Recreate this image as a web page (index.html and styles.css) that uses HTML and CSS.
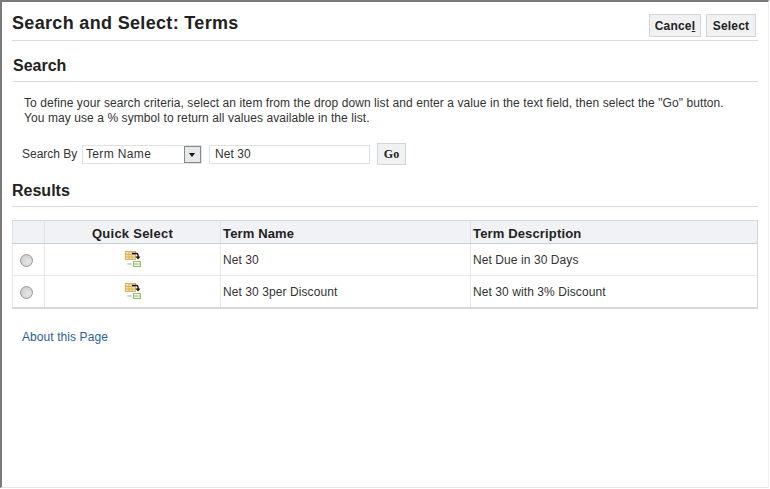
FILE: index.html
```html
<!DOCTYPE html>
<html lang="en">
<head>
    <meta charset="UTF-8">
    <title>Search and Select: Terms</title>
    <link rel="stylesheet" href="styles.css">
</head>
<body>
<div class="window">
    <div class="title-bar">
        <h1 class="title">Search and Select: Terms</h1>
        <div class="actions">
            <button class="btn btn-cancel" type="button">Cance<u>l</u></button>
            <button class="btn btn-select" type="button">Select</button>
        </div>
    </div>

    <h2 class="section section-search">Search</h2>
    <p class="hint">To define your search criteria, select an item from the drop down list and enter a value in the text field, then select the "Go" button.<br>You may use a % symbol to return all values available in the list.</p>
    <div class="search-row">
        <span class="search-label">Search By</span>
        <div class="select">
            <span class="select-value">Term Name</span>
            <span class="select-arrow"></span>
        </div>
        <div class="text-field">Net 30</div>
        <button class="btn btn-go" type="button">Go</button>
    </div>

    <h2 class="section section-results">Results</h2>
    <table class="results">
        <thead>
            <tr>
                <th class="col-radio"></th>
                <th class="col-quick">Quick Select</th>
                <th class="col-name">Term Name</th>
                <th>Term Description</th>
            </tr>
        </thead>
        <tbody>
            <tr>
                <td class="cell-radio"><span class="radio"></span></td>
                <td class="cell-icon">
                    <svg class="quick-icon" width="18" height="18" viewBox="0 0 18 18">
                        <rect x="1.5" y="1.5" width="10" height="8" fill="#f8e2a8" stroke="#d9b365"/>
                        <path d="M2 4.5h9M2 7h9M5 2v7M8 2v7" stroke="#d9b365" fill="none"/>
                        <rect x="9.5" y="11.5" width="7" height="5" fill="#f2f9ea" stroke="#8fbf6c"/>
                        <path d="M10 14h6M3.5 14h4" stroke="#8fbf6c" fill="none"/>
                        <path d="M8 3.5h4.5q1.5 0 1.5 1.5v2" stroke="#111" stroke-width="1.3" fill="none"/>
                        <path d="M11.5 6.5h5l-2.5 3z" fill="#111"/>
                    </svg>
                </td>
                <td class="cell-text">Net 30</td>
                <td class="cell-text">Net Due in 30 Days</td>
            </tr>
            <tr>
                <td class="cell-radio"><span class="radio"></span></td>
                <td class="cell-icon">
                    <svg class="quick-icon" width="18" height="18" viewBox="0 0 18 18">
                        <rect x="1.5" y="1.5" width="10" height="8" fill="#f8e2a8" stroke="#d9b365"/>
                        <path d="M2 4.5h9M2 7h9M5 2v7M8 2v7" stroke="#d9b365" fill="none"/>
                        <rect x="9.5" y="11.5" width="7" height="5" fill="#f2f9ea" stroke="#8fbf6c"/>
                        <path d="M10 14h6M3.5 14h4" stroke="#8fbf6c" fill="none"/>
                        <path d="M8 3.5h4.5q1.5 0 1.5 1.5v2" stroke="#111" stroke-width="1.3" fill="none"/>
                        <path d="M11.5 6.5h5l-2.5 3z" fill="#111"/>
                    </svg>
                </td>
                <td class="cell-text">Net 30 3per Discount</td>
                <td class="cell-text">Net 30 with 3% Discount</td>
            </tr>
        </tbody>
    </table>

    <a class="about" href="#">About this Page</a>
</div>
</body>
</html>
```

FILE: styles.css
```css
* {
    margin: 0;
    padding: 0;
    box-sizing: border-box;
}
html, body {
    height: 100%;
    background: #fff;
    overflow: hidden;
}
body {
    font-family: "Liberation Sans", Arial, sans-serif;
    font-size: 12px;
    letter-spacing: 0.08px;
    color: #333;
}
.window {
    width: 769px;
    height: 488px;
    padding: 0 10px 0 10px;
    border-top: 2px solid #7b7b7b;
    border-left: 2px solid #7b7b7b;
    border-right: 1px solid #f0f0f0;
    border-bottom: 1px solid #e6e6e6;
}
.title-bar {
    display: flex;
    justify-content: space-between;
    height: 39px;
    border-bottom: 1px solid #d9dcdc;
}
.title {
    font-size: 18px;
    line-height: 20px;
    margin-top: 11px;
    color: #222;
    letter-spacing: 0.33px;
}
.actions {
    display: flex;
    gap: 5px;
    margin: 12px 2px 0 0;
}
.btn {
    height: 23px;
    border: 1px solid #d3d6d9;
    background: #eff1f3;
    font-family: "Liberation Sans", Arial, sans-serif;
    font-size: 12px;
    font-weight: bold;
    letter-spacing: 0.2px;
    color: #222;
}
.btn-cancel {
    width: 52px;
}
.btn-select {
    width: 50px;
}
.btn-go {
    width: 29px;
    height: 22px;
    margin-left: 7px;
    font-family: "Liberation Serif", serif;
}
.section {
    font-size: 16px;
    line-height: 18px;
    letter-spacing: 0;
    color: #222;
    border-bottom: 1px solid #d9dcdc;
}
.section-search {
    margin: 16px 0 0 1px;
    padding-bottom: 6px;
}
.section-results {
    margin-top: 17px;
    padding-bottom: 6px;
}
.hint {
    margin: 14px 0 0 12px;
    line-height: 15px;
    color: #333;
}
.search-row {
    display: flex;
    align-items: center;
    margin: 17px 0 0 10px;
    height: 22px;
}
.search-label {
    width: 60px;
    letter-spacing: 0;
}
.select {
    display: flex;
    justify-content: space-between;
    align-items: center;
    width: 120px;
    height: 19px;
    padding: 0 0 0 3px;
    border: 1px solid #dfe2e4;
}
.select-value {
    letter-spacing: 0.35px;
}
.select-arrow {
    position: relative;
    width: 17px;
    height: 17px;
    border: 1px solid #8a8a8a;
    background: #e6e8ea;
}
.select-arrow::after {
    content: "";
    position: absolute;
    left: 4px;
    top: 6px;
    border-left: 3px solid transparent;
    border-right: 3px solid transparent;
    border-top: 4px solid #111;
}
.text-field {
    width: 161px;
    height: 19px;
    margin-left: 7px;
    padding-left: 5px;
    line-height: 17px;
    border: 1px solid #dfe2e4;
}
.results {
    width: 746px;
    margin-top: 13px;
    border-collapse: collapse;
    table-layout: fixed;
    border: 1px solid #d5d8da;
    border-bottom-width: 2px;
}
.results th {
    height: 23px;
    padding: 2px 0 0 2px;
    background: #f0f2f5;
    font-size: 13px;
    letter-spacing: 0.15px;
    text-align: left;
    color: #222;
    border-left: 1px solid #dfe2e5;
    border-bottom: 1px solid #ccd0d3;
}
.results td {
    height: 32px;
    padding-left: 2px;
    border-left: 1px solid #e6e8ea;
    border-bottom: 1px solid #e6e8ea;
}
.results .cell-text {
    padding-top: 1px;
}
.results .col-quick {
    text-align: center;
    padding-left: 0;
    letter-spacing: 0.25px;
}
.col-radio {
    width: 32px;
}
.col-quick {
    width: 176px;
}
.col-name {
    width: 250px;
}
.results .cell-icon {
    text-align: center;
    padding: 0;
}
.results .cell-radio {
    padding: 2px 0 0 7px;
}
.radio {
    display: block;
    width: 13px;
    height: 13px;
    border: 1px solid #9a9a9a;
    border-radius: 50%;
    background: radial-gradient(circle at 60% 60%, #e8e8e8, #c4c4c4);
}
.quick-icon {
    display: block;
    margin: 0 auto 1px;
}
.about {
    display: block;
    width: max-content;
    margin: 21px 0 0 10px;
    color: #2a5f96;
    text-decoration: none;
}
```
